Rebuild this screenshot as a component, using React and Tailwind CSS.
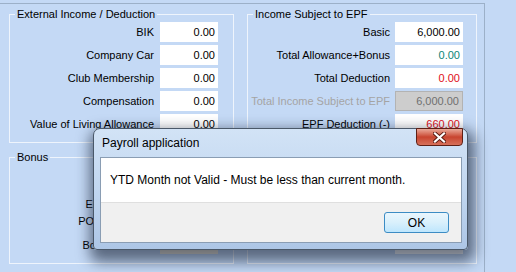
import React from 'react';

const externalRows = [
  { label: 'BIK', value: '0.00' },
  { label: 'Company Car', value: '0.00' },
  { label: 'Club Membership', value: '0.00' },
  { label: 'Compensation', value: '0.00' },
  { label: 'Value of Living Allowance', value: '0.00' },
];

const epfRows = [
  { label: 'Basic', value: '6,000.00', color: 'text-black' },
  { label: 'Total Allowance+Bonus', value: '0.00', color: 'text-[#0b8577]' },
  { label: 'Total Deduction', value: '0.00', color: 'text-[#e0101a]' },
  { label: 'Total Income Subject to EPF', value: '6,000.00', disabled: true },
  { label: 'EPF Deduction (-)', value: '660.00', color: 'text-[#e0101a]' },
];

function Field({ label, value, boxWidth, gap, color = 'text-black', disabled }) {
  return (
    <div className="flex items-center justify-end h-[20px]">
      <span className={`whitespace-nowrap ${gap} ${disabled ? 'text-[#a4a4a4]' : 'text-black'}`}>{label}</span>
      <div
        className={`h-[20px] ${boxWidth} flex items-center justify-end pr-[3px] ${
          disabled ? 'bg-[#cdcdcd] border border-[#b3b3b3] text-[#707070]' : `bg-white ${color}`
        }`}
      >
        {value}
      </div>
    </div>
  );
}

function GroupBox({ title, className, children }) {
  return (
    <fieldset className={`border border-[#eef4fc] ${className}`}>
      <legend className="ml-[5px] px-[2px] leading-[14px] text-black">{title}</legend>
      {children}
    </fieldset>
  );
}

function CloseGlyph() {
  return (
    <svg width="13" height="11" viewBox="0 0 13 11">
      <path d="M2 1.5 L11 9.5 M11 1.5 L2 9.5" stroke="#5a1b12" strokeWidth="4" strokeLinecap="square" />
      <path d="M2 1.5 L11 9.5 M11 1.5 L2 9.5" stroke="#ffffff" strokeWidth="2.2" strokeLinecap="square" />
    </svg>
  );
}

export default function App() {
  return (
    <div className="relative w-[516px] h-[272px] overflow-hidden bg-[#c4d9f5] font-['Liberation_Sans',Arial,sans-serif] text-[11px]">
      <div className="mt-[3px] w-[485px] h-[269px] border-t border-r border-[#9cb0c8] pt-[3px] pl-[9px]">
        <div className="flex gap-[13px]">
          <GroupBox title="External Income / Deduction" className="w-[225px] h-[136px] pr-[15px]">
            <div className="flex flex-col gap-[3px] mt-[1px]">
              {externalRows.map((r) => (
                <Field key={r.label} {...r} boxWidth="w-[58px]" gap="mr-[6px]" />
              ))}
            </div>
          </GroupBox>
          <GroupBox title="Income Subject to EPF" className="w-[230px] h-[136px] pr-[13px]">
            <div className="flex flex-col gap-[3px] mt-[1px]">
              {epfRows.map((r) => (
                <Field key={r.label} {...r} boxWidth="w-[68px]" gap="mr-[5px]" />
              ))}
            </div>
          </GroupBox>
        </div>

        <div className="flex gap-[13px] mt-[7px]">
          <GroupBox title="Bonus" className="w-[225px] h-[114px] pr-[15px]">
            <div className="flex flex-col mt-[32px]">
              <div className="flex items-center justify-end h-[17px]">
                <span className="mr-[6px] whitespace-nowrap">Entertainment</span>
                <div className="w-[58px] h-[17px] bg-white" />
              </div>
              <div className="flex items-center justify-end h-[17px]">
                <span className="mr-[6px] whitespace-nowrap">POS Incentives</span>
                <div className="w-[58px] h-[17px]" />
              </div>
              <div className="flex items-center justify-end h-[20px] mt-[5px]">
                <span className="mr-[6px] whitespace-nowrap">Bonus Amount</span>
                <div className="w-[58px] h-[18px] bg-[#f3ead8]" />
              </div>
            </div>
          </GroupBox>
          <GroupBox title="Bonus Subject to EPF" className="w-[230px] h-[114px] pr-[13px]">
            <div className="flex flex-col gap-[3px] mt-[25px]">
              <Field label="Bonus" value="0.00" boxWidth="w-[68px]" gap="mr-[5px]" />
              <Field label="EPF Bonus" value="0.00" boxWidth="w-[68px]" gap="mr-[5px]" />
              <div className="flex items-center justify-end h-[20px]">
                <span className="mr-[5px] whitespace-nowrap text-[#55657a]">&lt;&gt;</span>
                <div className="w-[68px] h-[18px] bg-white" />
              </div>
            </div>
          </GroupBox>
        </div>
      </div>

      {/* message box */}
      <div className="absolute left-[93px] top-[128px] w-[375px] h-[122px] rounded-t-[7px] rounded-b-[4px] border border-[#4a5869] bg-gradient-to-b from-[#d2e3f6] via-[#c2d7f0] to-[#adc6e6] shadow-[2px_7px_14px_5px_rgba(20,30,50,0.6)] font-['Liberation_Sans',Arial,sans-serif] text-[12px]">
        <div className="h-[28px] pl-[8px] flex items-center text-black">Payroll application</div>
        <div className="ml-[6px] w-[362px] h-[86px] border border-[#8a9db3] flex flex-col">
          <div className="h-[44px] bg-white flex items-center pl-[9px] text-black">
            YTD Month not Valid - Must be less than current month.
          </div>
          <div className="flex-1 bg-[#f0f0f0] border-t border-[#dfdfdf] flex items-start justify-end pt-[9px] pr-[12px]">
            <button className="w-[65px] h-[21px] rounded-[3px] border border-[#3c8cc4] bg-gradient-to-b from-[#eaf6fd] via-[#d9f0fc] to-[#bee6fd] text-black text-[12px] leading-none">
              OK
            </button>
          </div>
        </div>
        <div className="absolute right-[4px] top-[-1px] w-[47px] h-[18px] rounded-b-[4px] border border-[#5e2016] bg-gradient-to-b from-[#e9a99a] via-[#c8442f] to-[#d6705a] flex items-center justify-center">
          <CloseGlyph />
        </div>
      </div>
    </div>
  );
}
